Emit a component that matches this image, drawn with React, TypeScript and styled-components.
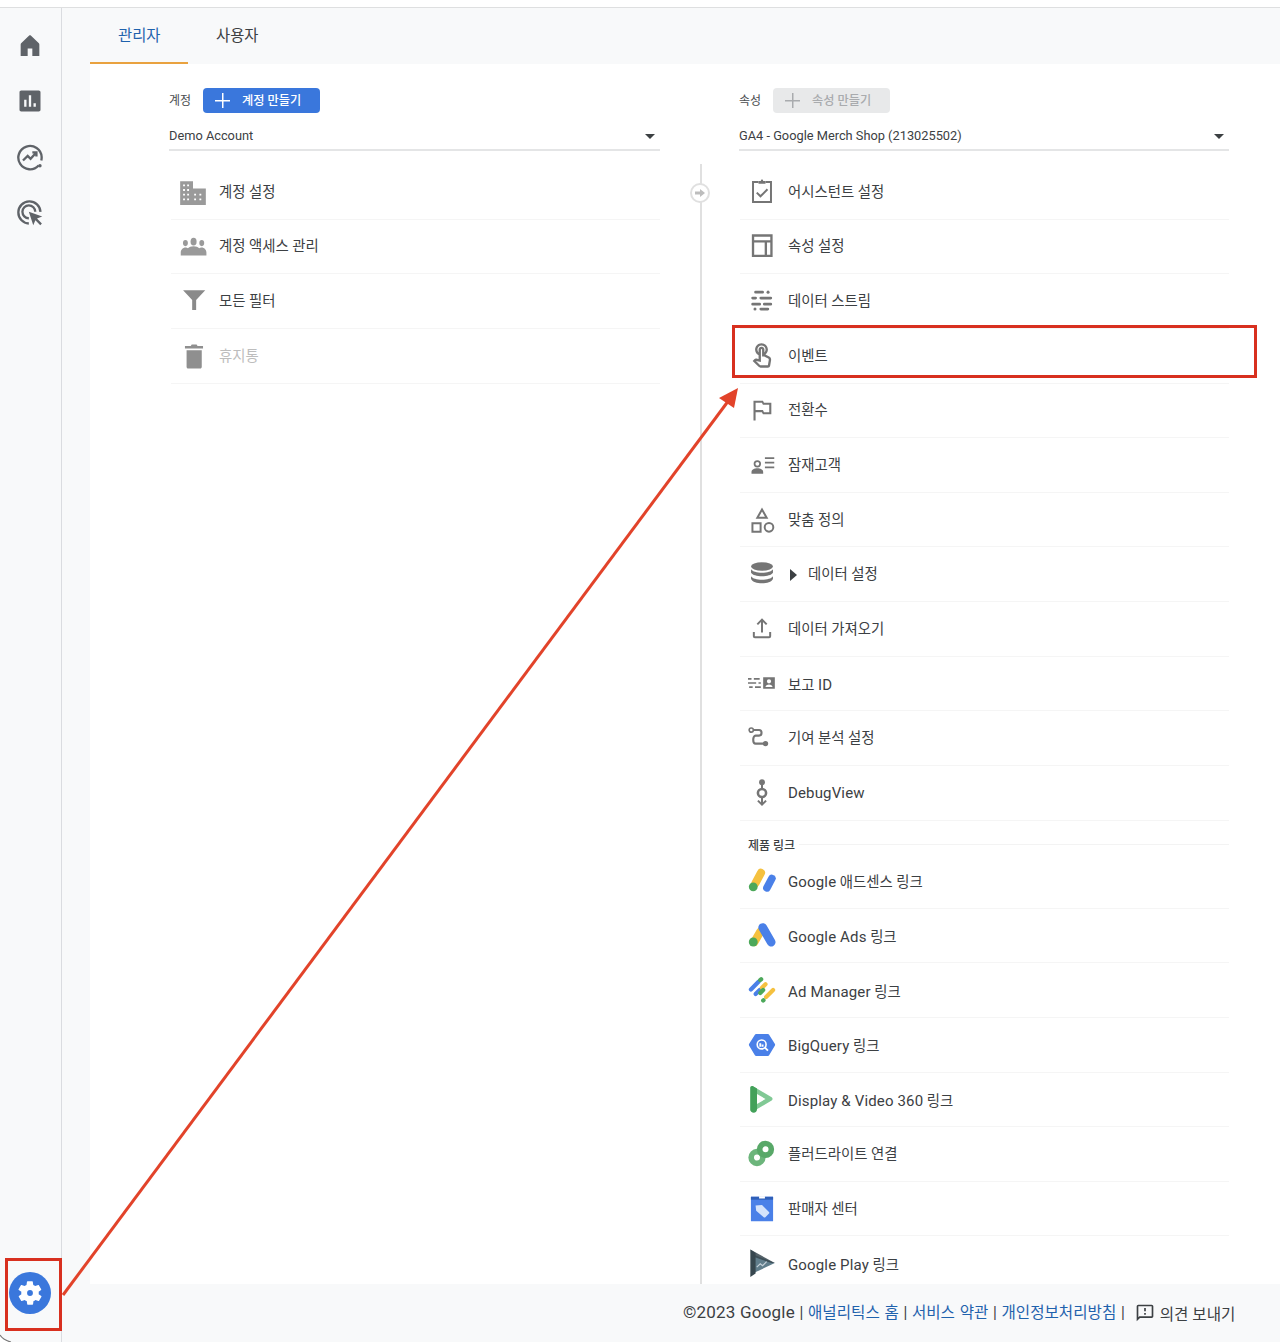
import React from 'react';
import styled, { createGlobalStyle } from 'styled-components';

const GlobalStyle = createGlobalStyle`
  html, body { margin: 0; padding: 0; background: #f8f9fa; }
  body { font-family: Roboto, "Noto Sans CJK KR", sans-serif; }
`;

const G = '#757575';

const Svg = ({ children, size = 28 }: { children: React.ReactNode; size?: number }) => (
  <svg width={size} height={size} viewBox="0 0 24 24">{children}</svg>
);

// sidebar icons
const HomeIcon = () => (
  <Svg><path fill="#5f6368" d="M10 21.500v-6.500h4v6.500h6v-10c0-.4-.2-.7-.4-.9l-6.900-6.700c-.4-.4-1-.4-1.400 0l-6.900 6.700c-.2.2-.4.500-.4.900v10z" /></Svg>
);
const ReportsIcon = () => (
  <Svg><path fill="#5f6368" d="M19.500 3h-15C3.600 3 3 3.600 3 4.500v15c0 .9.600 1.500 1.500 1.500h15c.9 0 1.500-.6 1.500-1.500v-15c0-.9-.6-1.500-1.500-1.500zM9 17H7v-6h2v6zm4 0h-2V7h2v10zm4 0h-2v-3h2v3z" /></Svg>
);
const ExploreIcon = () => (
  <Svg>
    <path fill="none" stroke="#5f6368" strokeWidth="2" d="M19.400 19.300A10 10 0 1 1 22 12c0 1 0 2-.3 3" />
    <path fill="none" stroke="#5f6368" strokeWidth="2" d="M6 15l4-4 2.500 2.500 4.500-5M14 8h3.500v3.500" />
    <circle cx="20.500" cy="19.500" r="1.500" fill="#5f6368" />
  </Svg>
);
const AdvertisingIcon = () => (
  <Svg>
    <path fill="none" stroke="#5f6368" strokeWidth="2" d="M11 21a9.500 9.500 0 1 1 10-10M11 16.500a5.500 5.500 0 1 1 5.500-5.500" />
    <path fill="#5f6368" d="M11 11l11.500 4-4.500 1.800 4.200 4.200-1.400 1.400-4.200-4.200L14.800 22.500z" />
  </Svg>
);
const GearIcon = () => (
  <svg width="28" height="28" viewBox="0 0 24 24">
    <path fill="#fff" fillRule="evenodd" d="M19.400 13c.1-.3.100-.7.100-1s0-.7-.1-1l2.100-1.600c.2-.2.200-.4.100-.6l-2-3.500c-.1-.2-.4-.3-.6-.2l-2.500 1c-.5-.4-1.100-.7-1.700-1l-.4-2.700c0-.2-.2-.4-.5-.4h-4c-.2 0-.5.200-.5.400l-.4 2.700c-.6.200-1.200.6-1.700 1l-2.500-1c-.2-.1-.5 0-.6.200l-2 3.500c-.1.200-.1.500.1.600L4.600 11c0 .3-.1.700-.1 1s0 .7.100 1l-2.100 1.600c-.2.200-.2.400-.1.600l2 3.500c.1.200.4.300.6.200l2.500-1c.5.400 1.100.7 1.700 1l.4 2.700c0 .2.200.4.500.4h4c.2 0 .5-.2.500-.4l.4-2.700c.6-.2 1.200-.6 1.700-1l2.500 1c.2.100.5 0 .6-.2l2-3.500c.1-.2.100-.5-.1-.6zM12 14.500a2.500 2.500 0 1 1 0-5 2.500 2.500 0 0 1 0 5z" />
  </svg>
);

// left column icons
const BuildingIcon = () => (
  <Svg>
    <path fill="#9a9a9a" fillRule="evenodd" d="M1 2.700h11v6.300h11v14.200H1zM3.500 5.500v1.600h1.600V5.500zm3.500 0v1.600h1.600V5.500zM3.500 9.500v1.600h1.600V9.500zm3.500 0v1.600h1.600V9.500zM3.500 13.500v1.600h1.600v-1.600zm3.500 0v1.600h1.600v-1.600zM3.500 17.500v1.600h1.600v-1.600zm3.500 0v1.600h1.600v-1.600zm6-4v1.600h1.600v-1.600zm4.500 0v1.600h1.600v-1.600zm-4.500 4v1.600h1.600v-1.600zm4.500 0v1.600h1.600v-1.600z" />
  </Svg>
);
const PeopleIcon = () => (
  <Svg>
    <g fill="#9a9a9a" transform="translate(.5 -3) scale(1 1.250)">
      <circle cx="12" cy="9" r="2.600" /><circle cx="5" cy="10" r="2.100" /><circle cx="19" cy="10" r="2.100" />
      <path d="M1 18.500v-2c0-2 2-3.500 4-3.500 1 0 1.500.2 2.200.6C8 12.800 10 12.200 12 12.200s4 .6 4.800 1.400c.7-.4 1.200-.6 2.200-.6 2 0 4 1.500 4 3.500v2z" />
    </g>
  </Svg>
);
const FilterIcon = () => (
  <Svg><path fill="#8a8a8a" d="M3.500 2.700h19l-7.800 8.400v8.600h-3.400v-8.600z" /></Svg>
);
const TrashIcon = () => (
  <Svg><path fill="#8f8f8f" d="M6.500 7h13v14.500c0 .7-.6 1.300-1.300 1.300H7.800c-.7 0-1.300-.6-1.300-1.300zM5.100 3.500h5l.8-1.300h4.200l.8 1.300h4.700v2H5.100z" /></Svg>
);

// right column icons
const Line = ({ d, w = 1.700 }: { d: string; w?: number }) => (
  <path fill="none" stroke={G} strokeWidth={w} d={d} />
);
const AssistantIcon = () => (
  <Svg>
    <Line d="M9 3.500H4.300v17h15.400v-17H15" />
    <path fill={G} d="M9 2.500h2c0-1.500 2-1.500 2 0h2V5H9z" />
    <Line d="M7.500 12.500l3.200 3.200 6-6" />
  </Svg>
);
const PropertyIcon = () => (
  <Svg><Line w={2} d="M4.300 3h15.800v17.500H4.300zM4.300 8h15.800M15.300 8v12.500" /></Svg>
);
const StreamsIcon = () => (
  <Svg>
    <g strokeLinecap="round">
      <Line w={2.400} d="M6.500 4.400h6M4 9.500h2.500M11 9.500h8.500M4 14.700h6M14 14.700h5.500M11 18.900h6" />
    </g>
    <g fill={G}><circle cx="17.200" cy="4.400" r="1.300" /><circle cx="6" cy="18.900" r="1.300" /></g>
  </Svg>
);
const TouchIcon = () => (
  <Svg><path fill={G} d="M18.190 12.440l-3.240-1.620c1.290-1 2.120-2.560 2.120-4.320 0-3.030-2.470-5.500-5.500-5.500s-5.500 2.470-5.500 5.500c0 2.130 1.220 3.980 3 4.890v3.260c-2.150-.46-2.020-.44-2.260-.44-.53 0-1.030.21-1.410.59L4 16.220l5.090 5.090C9.520 21.750 10.120 22 10.740 22h6.300c.98 0 1.810-.7 1.970-1.670l.8-4.710c.22-1.300-.43-2.580-1.620-3.180zm-.35 2.850l-.8 4.710h-6.300c-.09 0-.17-.04-.24-.1l-3.680-3.680 4.250.89V6.500c0-.28.22-.5.5-.5s.5.22.5.5v6h1.760l3.460 1.730c.4.2.62.63.55 1.060zM8.070 6.500c0-1.930 1.570-3.500 3.500-3.500s3.500 1.570 3.500 3.500c0 .95-.38 1.810-1 2.440V6.500c0-1.380-1.120-2.500-2.500-2.500s-2.500 1.120-2.500 2.500v2.440c-.62-.63-1-1.490-1-2.440z" /></Svg>
);
const FlagIcon = () => (
  <Svg><path fill={G} transform="translate(1.100 1.300) scale(.9)" d="M14 5l-1-2H4v19h2v-8h6l1 2h8V5h-7zm5 9h-5l-1-2H6V5h6l1 2h6v7z" /></Svg>
);
const AudienceIcon = () => (
  <Svg>
    <circle cx="8" cy="11" r="2.400" fill="none" stroke={G} strokeWidth="1.500" />
    <path fill={G} d="M3 19.500v-1.600c0-2 2.500-3.100 5-3.100s5 1.100 5 3.100v1.600z" />
    <Line w={1.500} d="M14.500 6h8M14.500 10h8M14.500 14h8" />
  </Svg>
);
const ShapesIcon = () => (
  <Svg>
    <Line d="M12 3l4 7H8zM3.800 14.800h7V22h-7z" />
    <circle cx="18" cy="18.300" r="3.700" fill="none" stroke={G} strokeWidth="1.700" />
  </Svg>
);
const DatabaseIcon = () => (
  <Svg>
    <g fill={G}>
      <ellipse cx="12" cy="5.600" rx="9.400" ry="3.600" />
      <path d="M2.600 8c1.300 2 5 3 9.400 3s8.100-1 9.400-3v3c-1.300 2-5 3-9.400 3s-8.100-1-9.400-3z" />
      <path d="M2.600 14c1.300 2 5 3 9.400 3s8.100-1 9.400-3v2.300c-1.300 2.600-5 3.700-9.400 3.700s-8.100-1.100-9.400-3.700z" />
    </g>
  </Svg>
);
const UploadIcon = () => (
  <Svg><Line d="M12 15V4M8 8l4-4 4 4M5 14.500v3.700c0 .5.400.9.900.9h12.200c.5 0 .9-.4.900-.9v-3.700" /></Svg>
);
const ReportIdIcon = () => (
  <Svg>
    <Line w={1.400} d="M0 8.500h3M5 8.500h5M0 12h7M9 12h2M1 15.500h3M6 15.500h5" />
    <path fill={G} fillRule="evenodd" d="M13 7h10v10H13zM18 8.800a1.800 1.800 0 1 0 0 3.600 1.800 1.800 0 0 0 0-3.600zM15 15.500h6c0-1.500-1.500-2.200-3-2.200s-3 .7-3 2.200z" />
  </Svg>
);
const AttributionIcon = () => (
  <Svg>
    <circle cx="2.800" cy="5.200" r="1.800" fill="none" stroke={G} strokeWidth="1.400" />
    <Line w={1.800} d="M4.600 5.200H9.500c2.800 0 2.800 4.800 0 4.800H6.500c-2.700 0-2.700 6.800 0 6.800H14" />
    <circle cx="15" cy="16.800" r="2.300" fill={G} />
  </Svg>
);
const DebugIcon = () => (
  <Svg>
    <circle cx="12" cy="2.800" r="2.500" fill={G} />
    <path stroke={G} strokeWidth="1.700" d="M12 5v3M12 16v6" fill="none" />
    <circle cx="12" cy="12" r="3.500" fill="none" stroke={G} strokeWidth="2.200" />
    <Line w={1.700} d="M8.500 18.500l3.500 3.500 3.500-3.500" />
  </Svg>
);

// product logos
const AdsenseLogo = () => (
  <Svg>
    <rect x="5.500" y="1" width="7" height="17" rx="3.500" fill="#f5c13f" transform="rotate(28 9 9)" />
    <rect x="15" y="6" width="6.500" height="15.500" rx="3.250" fill="#4a80e8" transform="rotate(28 18 14)" />
    <circle cx="4.500" cy="17" r="3.800" fill="#4ca85a" />
  </Svg>
);
const AdsLogo = () => (
  <Svg>
    <rect x="4.800" y="5" width="7" height="17" rx="3.500" fill="#f5c13f" transform="rotate(30 8 13)" />
    <rect x="12.500" y="1" width="7.500" height="22" rx="3.750" fill="#4a80e8" transform="rotate(-30 16 12)" />
    <circle cx="4.500" cy="18" r="3.800" fill="#4ca85a" />
  </Svg>
);
const AdManagerLogo = () => (
  <Svg>
    <g strokeLinecap="round" strokeWidth="3.600" fill="none">
      <path stroke="#4a80e8" d="M2.500 11.500L9 5" />
      <path stroke="#4ca85a" d="M10.500 3.500l.8-.8" />
      <path stroke="#4a80e8" d="M6.500 15.500l3.500-3.500" />
      <path stroke="#f5c13f" d="M12 10l3-3" />
      <path stroke="#4ca85a" d="M10.500 14.500l2.500-2.500" />
      <path stroke="#f5c13f" d="M15.500 18l6-6" />
      <path stroke="#4ca85a" d="M13 21l.3-.3" />
    </g>
  </Svg>
);
const BigQueryLogo = () => (
  <Svg>
    <path fill="#4a80e8" d="M7 2.500h10c.5 0 .9.300 1.100.7l5 8c.2.500.2.900 0 1.300l-5 8.300c-.2.400-.6.700-1.100.7H7c-.5 0-.9-.3-1.100-.7l-5-8.300c-.2-.4-.2-.8 0-1.300l5-8c.2-.4.600-.7 1.100-.7z" />
    <circle cx="11.700" cy="11.500" r="3.800" fill="none" stroke="#fff" strokeWidth="1.400" />
    <path stroke="#fff" strokeWidth="1.600" d="M14.500 14.200l2.600 2.600M10.500 10.500v3M12.500 11.500v2" fill="none" />
  </Svg>
);
const DisplayLogo = () => (
  <Svg>
    <path fill="#81c995" d="M2 2.500c0-1.300 1.300-2 2.300-1.400l16 9.500c1 .6 1 2 0 2.600l-16 9.500C3.300 23.300 2 22.600 2 21.500z" />
    <path fill="#fff" d="M7.700 7.700L15 12l-7.300 4.300z" />
    <path fill="#43a15a" d="M2 2.500c0-1.300 1.300-2 2.300-1.400l3.400 2V21c0 1.500-1.200 2.700-2.800 2.700S2 22.500 2 21z" />
  </Svg>
);
const FloodlightLogo = () => (
  <Svg>
    <circle cx="7.700" cy="15" r="5" fill="none" stroke="#6cb57b" strokeWidth="4.800" />
    <circle cx="15" cy="8" r="5" fill="none" stroke="#58a868" strokeWidth="4.800" />
  </Svg>
);
const MerchantLogo = () => (
  <Svg>
    <path fill="#4a80e8" d="M2.500 1.500h19v21h-19z" />
    <path fill="#2f5fb8" d="M2.500 1.500h19v2.500h-19z" />
    <path fill="#fff" d="M9.500 1h5v2h-5z" />
    <path fill="#d5e3fb" d="M6.500 9l5.500-.5 6 6c.4.400.4 1 0 1.400l-3.100 3.100c-.4.400-1 .4-1.400 0L7 13.500z" />
  </Svg>
);
const PlayLogo = () => (
  <Svg>
    <path fill="#607d8b" d="M3 4l20 8-20 9.500z" />
    <path fill="#37474f" d="M2 .5l4.500 3V21L2 24z" />
    <path fill="#37474f" opacity=".85" d="M2 .5L23 12h-3L6 7z" />
    <path fill="none" stroke="#c5d0d8" strokeWidth="1" d="M7.500 15.500l3-2.800 2 1.600 3.500-3.500" />
  </Svg>
);

type RowItem = { label: string; icon: React.ReactNode; muted?: boolean; caret?: boolean };

const accountRows: RowItem[] = [
  { label: '계정 설정', icon: <BuildingIcon /> },
  { label: '계정 액세스 관리', icon: <PeopleIcon /> },
  { label: '모든 필터', icon: <FilterIcon /> },
  { label: '휴지통', icon: <TrashIcon />, muted: true },
];

const propertyRows: RowItem[] = [
  { label: '어시스턴트 설정', icon: <AssistantIcon /> },
  { label: '속성 설정', icon: <PropertyIcon /> },
  { label: '데이터 스트림', icon: <StreamsIcon /> },
  { label: '이벤트', icon: <TouchIcon /> },
  { label: '전환수', icon: <FlagIcon /> },
  { label: '잠재고객', icon: <AudienceIcon /> },
  { label: '맞춤 정의', icon: <ShapesIcon /> },
  { label: '데이터 설정', icon: <DatabaseIcon />, caret: true },
  { label: '데이터 가져오기', icon: <UploadIcon /> },
  { label: '보고 ID', icon: <ReportIdIcon /> },
  { label: '기여 분석 설정', icon: <AttributionIcon /> },
  { label: 'DebugView', icon: <DebugIcon /> },
];

const productRows: RowItem[] = [
  { label: 'Google 애드센스 링크', icon: <AdsenseLogo /> },
  { label: 'Google Ads 링크', icon: <AdsLogo /> },
  { label: 'Ad Manager 링크', icon: <AdManagerLogo /> },
  { label: 'BigQuery 링크', icon: <BigQueryLogo /> },
  { label: 'Display & Video 360 링크', icon: <DisplayLogo /> },
  { label: '플러드라이트 연결', icon: <FloodlightLogo /> },
  { label: '판매자 센터', icon: <MerchantLogo /> },
  { label: 'Google Play 링크', icon: <PlayLogo /> },
];

// latin runs are set a touch larger than the hangul around them
const splitLatin = (text: string) =>
  text.split(/([A-Za-z0-9&]+(?: [A-Za-z0-9&]+)*)/).map((part, i) =>
    i % 2 ? <Latin key={i}>{part}</Latin> : part
  );

const renderRows = (rows: RowItem[]) =>
  rows.map((r) => (
    <Row key={r.label}>
      <IconBox>{r.icon}</IconBox>
      {r.caret && <Caret />}
      <RowLabel $muted={r.muted} $hangulOnly={!/[A-Za-z]/.test(r.label)}>{splitLatin(r.label)}</RowLabel>
    </Row>
  ));

const App = () => {
  return (
    <Page>
      <GlobalStyle />
      <TopStrip />
      <Body>
        <Sidebar>
          <NavIcons>
            <NavIcon><HomeIcon /></NavIcon>
            <NavIcon><ReportsIcon /></NavIcon>
            <NavIcon><ExploreIcon /></NavIcon>
            <NavIcon><AdvertisingIcon /></NavIcon>
          </NavIcons>
          <SettingsButton><GearIcon /></SettingsButton>
        </Sidebar>
        <Main>
          <Tabs>
            <Tab $active>관리자</Tab>
            <Tab>사용자</Tab>
          </Tabs>
          <Content>
            <Column>
              <ColumnHead>
                <HeadLabel>계정</HeadLabel>
                <CreateButton><Plus />계정 만들기</CreateButton>
              </ColumnHead>
              <Picker>Demo Account<PickerArrow /></Picker>
              <RowList>{renderRows(accountRows)}</RowList>
            </Column>
            <Divider><DividerKnob>
              <svg width="10" height="10" viewBox="0 0 10 10"><path fill="#bdbdbd" d="M0 3.500h5V1l5 4-5 4V6.500H0z" /></svg>
            </DividerKnob></Divider>
            <Column>
              <ColumnHead>
                <HeadLabel>속성</HeadLabel>
                <CreateButton $disabled><Plus />속성 만들기</CreateButton>
              </ColumnHead>
              <Picker>GA4 - Google Merch Shop (213025502)<PickerArrow /></Picker>
              <RowList $right>
                {renderRows(propertyRows)}
                <SectionTitle>제품 링크</SectionTitle>
                {renderRows(productRows)}
              </RowList>
            </Column>
          </Content>
          <Footer>
            <FooterText>
              <FooterLatin>©2023 Google</FooterLatin> | <FooterLink>애널리틱스 홈</FooterLink> | <FooterLink>서비스 약관</FooterLink> | <FooterLink>개인정보처리방침</FooterLink> |
            </FooterText>
            <Feedback>
              <svg width="20" height="20" viewBox="0 0 24 24"><path fill="#3c4043" d="M20 2H4c-1.100 0-2 .9-2 2v18l4-4h14c1.100 0 2-.9 2-2V4c0-1.100-.9-2-2-2zm0 14H5.200L4 17.200V4h16v12zM11 12h2v2h-2zm0-6h2v4h-2z" /></svg>
              의견 보내기
            </Feedback>
          </Footer>
        </Main>
      </Body>

      <EventHighlight />
      <SettingsHighlight />
      <ArrowLayer width="1280" height="1342" viewBox="0 0 1280 1342">
        <line x1="63" y1="1295" x2="729" y2="400" stroke="#e2432a" strokeWidth="3" />
        <path fill="#e2432a" d="M738 388l-4 20-15-10z" />
        <path fill="#fff" d="M0 1335q3 5 11 7H0z" />
        <path fill="none" stroke="#777" strokeWidth="1.200" d="M0 1335q3 5 11 7" />
      </ArrowLayer>
    </Page>
  );
};

const Page = styled.div`
  position: relative;
  width: 1280px;
  height: 1342px;
  overflow: hidden;
  background: #f8f9fa;
  color: #3c4043;
`;

const TopStrip = styled.div`
  height: 7px;
  background: #fff;
  border-bottom: 1px solid #dedfe0;
`;

const Body = styled.div`
  display: flex;
  height: 1334px;
`;

const Sidebar = styled.nav`
  width: 62px;
  flex: none;
  border-right: 1px solid #dadce0;
  display: flex;
  flex-direction: column;
  align-items: center;
  justify-content: space-between;
  padding: 23px 2px 28px 0;
  box-sizing: border-box;
`;

const NavIcons = styled.div`
  display: flex;
  flex-direction: column;
  gap: 28px;
`;

const NavIcon = styled.div`
  width: 28px;
  height: 28px;
`;

const SettingsButton = styled.div`
  width: 42px;
  height: 42px;
  border-radius: 50%;
  background: #3a77dc;
  display: flex;
  align-items: center;
  justify-content: center;
`;

const Main = styled.main`
  flex: 1;
  min-width: 0;
  display: flex;
  flex-direction: column;
  padding-left: 28px;
`;

const Tabs = styled.div`
  display: flex;
  height: 56px;
  flex: none;
`;

const Tab = styled.div<{ $active?: boolean }>`
  width: 98px;
  height: 56px;
  box-sizing: border-box;
  padding: 18px 0 0 28px;
  font-size: 15.400px;
  line-height: 20px;
  color: ${(p) => (p.$active ? '#1f62ad' : '#3c4043')};
  border-bottom: 2px solid ${(p) => (p.$active ? '#e9a23f' : 'transparent')};
`;

const Content = styled.div`
  flex: 1;
  min-height: 0;
  overflow: hidden;
  background: #fff;
  display: grid;
  grid-template-columns: 491px 79px 490px;
  padding-left: 79px;
`;

const Column = styled.section`
  min-width: 0;
`;

const ColumnHead = styled.div`
  display: flex;
  align-items: center;
  height: 25px;
  margin-top: 24px;
`;

const HeadLabel = styled.span`
  width: 34px;
  flex: none;
  padding-bottom: 2px;
  font-size: 12px;
  color: #4a4d50;
`;

const CreateButton = styled.div<{ $disabled?: boolean }>`
  display: flex;
  align-items: center;
  height: 25px;
  box-sizing: border-box;
  padding: 0 19px 2px 12px;
  gap: 12px;
  border-radius: 4px;
  font-size: 12.200px;
  font-weight: 500;
  color: ${(p) => (p.$disabled ? '#a9abae' : '#fff')};
  background: ${(p) => (p.$disabled ? '#e8e9ea' : '#3a77dc')};
`;

const Plus = styled.span`
  width: 15px;
  height: 15px;
  flex: none;
  margin-top: 2px;
  background:
    linear-gradient(currentColor, currentColor) center / 100% 1.500px no-repeat,
    linear-gradient(currentColor, currentColor) center / 1.500px 100% no-repeat;
`;

const Picker = styled.div`
  position: relative;
  height: 38px;
  box-sizing: border-box;
  padding-top: 14px;
  font-size: 12.800px;
  line-height: 18px;
  color: #3c4043;
  border-bottom: 2px solid #e4e5e6;
`;

const PickerArrow = styled.span`
  position: absolute;
  right: 5px;
  top: 21px;
  border-left: 5px solid transparent;
  border-right: 5px solid transparent;
  border-top: 5px solid #3c4043;
`;

const RowList = styled.div<{ $right?: boolean }>`
  margin: 14px 0 0 ${(p) => (p.$right ? '1px' : '2px')};
`;

const Row = styled.div`
  display: flex;
  align-items: center;
  height: 54.640px;
  box-sizing: border-box;
  padding-left: 8px;
  border-bottom: 1px solid #f5f5f5;
`;

const IconBox = styled.div`
  width: 28px;
  height: 28px;
  flex: none;
  margin-right: 12px;
`;

const Caret = styled.span`
  width: 0;
  height: 0;
  margin: 1px 11px 0 2px;
  border-top: 6px solid transparent;
  border-bottom: 6px solid transparent;
  border-left: 7px solid #3c4043;
`;

const RowLabel = styled.span<{ $muted?: boolean; $hangulOnly?: boolean }>`
  font-size: 14.400px;
  padding-bottom: ${(p) => (p.$hangulOnly ? '3px' : '0')};
  color: ${(p) => (p.$muted ? '#bdbdbd' : '#3c4043')};
`;

const Latin = styled.span`
  font-size: 15px;
  letter-spacing: 0.150px;
`;

const SectionTitle = styled.div`
  display: flex;
  align-items: center;
  height: 33.500px;
  padding: 15px 0 0 8px;
  box-sizing: border-box;
  font-size: 12px;
  font-weight: 500;
  color: #3c4043;
  &::after {
    content: '';
    flex: 1;
    height: 1px;
    background: #f3f3f3;
    margin-left: 4px;
  }
`;

const Divider = styled.div`
  position: relative;
  width: 2px;
  margin: 100px 0 0 40px;
  background: #e0e0e0;
`;

const DividerKnob = styled.div`
  position: absolute;
  top: 19px;
  left: -10px;
  width: 16px;
  height: 16px;
  border: 2px solid #e0e0e0;
  border-radius: 50%;
  background: #fff;
  display: flex;
  align-items: center;
  justify-content: center;
`;

const Footer = styled.footer`
  flex: none;
  height: 58px;
  display: flex;
  align-items: center;
  padding: 0 47px 4px 593px;
  box-sizing: border-box;
  gap: 10px;
  white-space: nowrap;
`;

const FooterText = styled.div`
  font-size: 15.600px;
  word-spacing: 0.800px;
  color: #3c4043;
`;

const FooterLatin = styled.span`
  font-size: 17px;
  letter-spacing: 0.200px;
  word-spacing: 0;
`;

const FooterLink = styled.span`
  color: #1f62ad;
`;

const Feedback = styled.div`
  display: flex;
  align-items: center;
  gap: 5px;
  padding-top: 3px;
  font-size: 15.600px;
  color: #3c4043;
`;

const EventHighlight = styled.div`
  position: absolute;
  left: 732px;
  top: 325px;
  width: 525px;
  height: 53px;
  box-sizing: border-box;
  border: 3px solid #d8301f;
`;

const SettingsHighlight = styled.div`
  position: absolute;
  left: 5px;
  top: 1258px;
  width: 57px;
  height: 73px;
  box-sizing: border-box;
  border: 3px solid #d8301f;
`;

const ArrowLayer = styled.svg`
  position: absolute;
  left: 0;
  top: 0;
  pointer-events: none;
`;

export default App;
